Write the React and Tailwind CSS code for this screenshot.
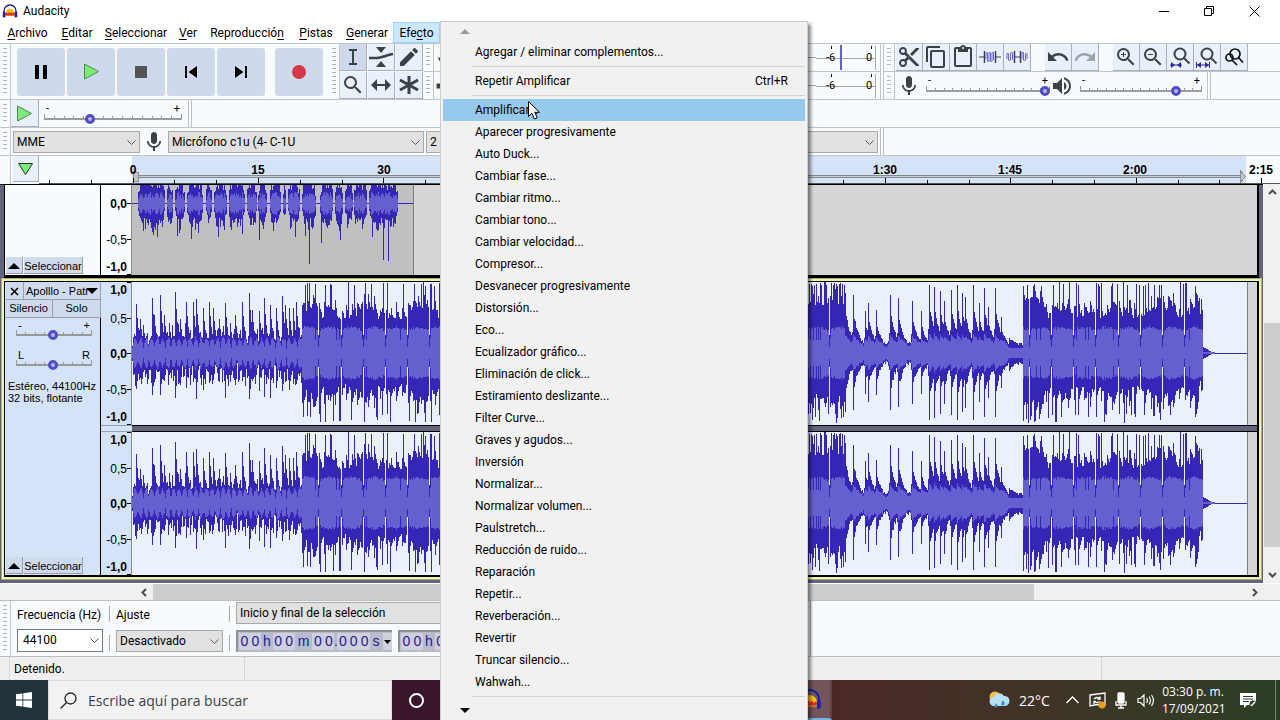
import React, { useState } from 'react';
import {
  MdContentCopy,
  MdContentCut,
  MdContentPaste,
  MdEdit,
  MdMic,
  MdPause,
  MdRedo,
  MdSearch,
  MdSkipNext,
  MdSkipPrevious,
  MdStop,
  MdUndo,
  MdVolumeUp,
  MdZoomIn,
  MdZoomOut,
} from 'react-icons/md';

// ---------------------------------------------------------------------------
// Data
// ---------------------------------------------------------------------------

// [text before, access key, text after, width]
const MENUS = [
  ['', 'A', 'rchivo', 'w-[55px]'],
  ['', 'E', 'ditar', 'w-[44px]'],
  ['', 'S', 'eleccionar', 'w-[74px]'],
  ['', 'V', 'er', 'w-[30px]'],
  ['Reproducció', 'n', '', 'w-[88px]'],
  ['', 'P', 'istas', 'w-[50px]'],
  ['', 'G', 'enerar', 'w-[52px]'],
  ['Efe', 'c', 'to', 'w-[47px]'],
];

const EFFECTS = [
  'Amplificar...',
  'Aparecer progresivamente',
  'Auto Duck...',
  'Cambiar fase...',
  'Cambiar ritmo...',
  'Cambiar tono...',
  'Cambiar velocidad...',
  'Compresor...',
  'Desvanecer progresivamente',
  'Distorsión...',
  'Eco...',
  'Ecualizador gráfico...',
  'Eliminación de click...',
  'Estiramiento deslizante...',
  'Filter Curve...',
  'Graves y agudos...',
  'Inversión',
  'Normalizar...',
  'Normalizar volumen...',
  'Paulstretch...',
  'Reducción de ruido...',
  'Reparación',
  'Repetir...',
  'Reverberación...',
  'Revertir',
  'Truncar silencio...',
  'Wahwah...',
];

// Peaks of the quiet intro: [x, height]
const INTRO = [
  [4, 49], [8, 34], [11, 28], [20, 55], [22, 38], [28, 58], [32, 38], [37, 30], [43, 61], [48, 34], [54, 51],
  [61, 51], [64, 54], [71, 45], [77, 51], [81, 45], [87, 34], [93, 50], [98, 30], [103, 38], [110, 51], [117, 60],
  [120, 43], [127, 42], [132, 55], [138, 48], [144, 45], [150, 57], [153, 48], [157, 45], [161, 45], [164, 51],
];

// Hits of the breakdown, each one decays to the right
const BREAK = [
  [713, 60], [721, 58], [733, 42], [736, 50], [744, 43], [758, 58], [766, 55], [780, 52], [789, 42], [797, 68],
  [802, 66], [808, 62], [812, 52], [819, 63], [825, 68], [830, 60], [833, 56], [841, 68], [847, 50], [852, 65],
  [856, 46], [863, 65], [869, 36],
];

// Voice bursts of the first track: [start, end]
const BURSTS = [
  [6, 33], [35, 41], [43, 53], [55, 71], [74, 80], [82, 95], [97, 113], [115, 125], [126, 135], [138, 149], [151, 154],
  [156, 168], [170, 184], [188, 201], [203, 211], [213, 221], [222, 235], [237, 266],
];
const VOICE_PEAKS = { 25: 34, 59: 36, 127: 37, 169: 42, 177: 61, 189: 40, 208: 37, 251: 57, 256: 58 };

// ---------------------------------------------------------------------------
// Waveforms
// ---------------------------------------------------------------------------

function makeRandom(seed) {
  let s = seed;
  return () => {
    s = (s * 1664525 + 1013904223) % 4294967296;
    return s / 4294967296;
  };
}

const bar = (x, mid, up, down) => `M${x} ${mid - Math.round(up)}h1V${mid + Math.round(down)}h-1z`;

function isLoud(x) {
  return (x >= 170 && x < 713) || (x >= 891 && x < 1071);
}

function hitLevel(hits, x, attack, decay) {
  return hits.reduce((max, [px, h]) => {
    const level = x < px ? h * Math.exp((x - px) / attack) : h * Math.exp((px - x) / decay);
    return Math.max(max, level);
  }, 0);
}

function buildMusic(seed, mid) {
  const rand = makeRandom(seed);
  let peak = '';
  let rms = '';
  let drift = 8;
  for (let x = 0; x < 1083; x += 1) {
    let up;
    let down;
    let body;
    if (isLoud(x)) {
      const phase = (x - 186 + 2220) % 22.2;
      const beat = phase % 5.55;
      drift = Math.max(0, Math.min(18, drift + (rand() - 0.5) * 10));
      up = 33 + drift + 16 * Math.exp(-beat / 1.5) + rand() * 4;
      down = 30 + drift * 0.9 + 18 * Math.exp(-beat / 1.5) + rand() * 6;
      if (rand() < 0.17) up = 67 + rand() * 4;
      if (rand() < 0.17) down = 60 + rand() * 10;
      body = 21 + rand() * 3 + Math.sin(phase / 7) * 3;
      if (phase < 1) {
        up = 18;
        down = 14;
        body = 6;
      } else if (phase < 2) {
        body = 15;
      } else if (rand() < 0.07) {
        body = 13;
      }
      if (x > 1066) {
        up *= 0.8;
        down *= 0.7;
      }
    } else if (x < 170) {
      const pulse = Math.abs(Math.sin((x * Math.PI) / 5.5));
      const hit = hitLevel(INTRO, x, 0.8, 3);
      const tail = hitLevel(INTRO, x, 1, 2.4);
      up = Math.max(hit, 6 + pulse * 10 + rand() * rand() * 16);
      down = Math.max(tail * (0.55 + rand() * 0.4), 6 + pulse * 10 + rand() * 18);
      body = Math.min(4 + pulse * 9 + rand() * 4, up - 2, down - 1);
    } else if (x < 891) {
      const hit = hitLevel(BREAK, x, 1.4, 6.5);
      const sharp = hitLevel(BREAK, x, 0.4, 1);
      up = Math.max(8 + rand() * 3, hit * 0.68 + rand() * 3, sharp);
      down = Math.max(8 + rand() * 3, hit * 0.6 + rand() * 5, sharp * 0.98);
      body = Math.min(up - 3, 6 + hit * 0.18 + rand() * 2);
      if (x > 876) {
        const fall = Math.max(0, 884 - x);
        up = 8 + fall * 0.7 + rand() * 3;
        down = 9 + fall * 0.9 + rand() * 3;
        body = 5;
      }
    } else {
      up = Math.max(1, 6 - (x - 1071) * 0.6);
      down = up;
      body = 1;
    }
    peak += bar(x, mid, up, down);
    rms += bar(x, mid, body, body);
  }
  return { peak, rms };
}

function buildVoice(mid) {
  const rand = makeRandom(77);
  let peak = '';
  let rms = '';
  BURSTS.forEach(([start, end]) => {
    for (let x = start; x < end; x += 1) {
      const edge = Math.min(1, (x - start + 2) / 4, (end - x + 1) / 4);
      const down = VOICE_PEAKS[x] || (15 + rand() * rand() * 20) * edge;
      const body = (5 + rand() * 6) * edge;
      peak += bar(x, mid, Math.min(18, (13 + rand() * 16) * edge), down);
      rms += bar(x, mid, body, body + 1);
    }
  });
  return { peak, rms };
}

const VOICE = buildVoice(18);
const LEFT = buildMusic(12, 71);
const RIGHT = buildMusic(12, 71);

function VoiceWave() {
  return (
    <svg className="block h-[90px] w-full bg-[#d6d6d6]" shapeRendering="crispEdges" aria-hidden="true">
      <rect width="281" height="90" fill="#c0c0c0" />
      <path d="M0 18h281v1H0z" fill="#3226b5" />
      <path d={VOICE.peak} fill="#3527b6" />
      <path d={VOICE.rms} fill="#655fcf" />
      <path d="M281 0h1v90h-1z" fill="#7c7c7c" />
    </svg>
  );
}

function MusicWave({ data }) {
  return (
    <svg className="block h-[143px] w-full bg-[#d6d6d6]" shapeRendering="crispEdges" aria-hidden="true">
      <rect width="1115" height="143" fill="#e9f1fd" />
      <path d="M0 71h1115v1H0z" fill="#3226b5" />
      <path d={data.peak} fill="#3527b6" />
      <path d={data.rms} fill="#655fcf" />
      <path d="M1115 0h1v143h-1z" fill="#7c7c7c" />
    </svg>
  );
}

// Amplitude scale at the left of a channel
function Scale({ labels, className }) {
  return (
    <svg className={`block w-[31px] shrink-0 border-r border-[#8a8a8a] ${className}`} shapeRendering="crispEdges">
      {labels.map(([text, y, tick]) => (
        <g key={text}>
          <text
            x="26"
            y={y + 4}
            textAnchor="end"
            className={`text-[12px] ${text === '0,5' || text === '-0,5' ? '' : 'font-bold'}`}
          >
            {text}
          </text>
          <path d={`M26 ${tick}h4v1h-4z`} />
        </g>
      ))}
    </svg>
  );
}

const CHANNEL_LABELS = [
  ['1,0', 8, 0],
  ['0,5', 37, 36],
  ['0,0', 72, 71],
  ['-0,5', 108, 107],
  ['-1,0', 135, 142],
];

// ---------------------------------------------------------------------------
// Small pieces
// ---------------------------------------------------------------------------

function Grabber() {
  return (
    <div className="flex w-[11px] shrink-0 flex-col items-center justify-evenly self-stretch border-r border-[#c2c5c9] px-[3px] py-1">
      <div className="h-full w-[4px] bg-[repeating-linear-gradient(to_bottom,#b4b8bd_0_1px,transparent_1px_4px)]" />
    </div>
  );
}

function DoubleLine() {
  return <div className="w-[4px] shrink-0 self-stretch border-x border-[#bcc0c4]" />;
}

function Slider({ label, low = '-', high = '+', value, className, ticks = 15 }) {
  const [current, setCurrent] = useState(value);
  return (
    <div className={className}>
      <div className="flex h-[10px] justify-between px-[2px] text-[11px] leading-[10px]">
        <span>{low}</span>
        <span>{high}</span>
      </div>
      <div className="relative h-[10px]">
        <div className="flex h-[6px] items-end justify-between border-b-2 border-[#9a9a9a]">
          {Array.from({ length: ticks }, (_, i) => (
            <span key={i} className="h-[2px] w-px bg-[#9a9a9a] first:h-[4px] last:h-[4px]" />
          ))}
        </div>
        <input
          type="range"
          aria-label={label}
          value={current}
          onChange={(e) => setCurrent(e.target.value)}
          className="absolute inset-0 h-[10px] w-full appearance-none bg-transparent [&::-webkit-slider-thumb]:size-[10px] [&::-webkit-slider-thumb]:appearance-none [&::-webkit-slider-thumb]:rounded-full [&::-webkit-slider-thumb]:border-[3px] [&::-webkit-slider-thumb]:border-[#504cc6] [&::-webkit-slider-thumb]:bg-[#b9b8ea]"
        />
      </div>
    </div>
  );
}

function Select({ label, value, className }) {
  return (
    <div className={`relative shrink-0 ${className}`}>
      <select
        aria-label={label}
        defaultValue={value}
        className="block h-[22px] w-full appearance-none border border-[#a9a9a9] bg-[#e1e1e1] pl-[3px] text-[12px]"
      >
        <option>{value}</option>
      </select>
      <svg className="pointer-events-none absolute top-[9px] right-[4px]" width="9" height="6" fill="none" stroke="#555">
        <path d="M.5 .5 4.500 4.500 8.500 .5" />
      </svg>
    </div>
  );
}

function TransportButton({ label, children }) {
  return (
    <button aria-label={label} className="flex size-12 shrink-0 items-center justify-center rounded-[3px] bg-[#cedaec]">
      {children}
    </button>
  );
}

function ToolButton({ label, active, children }) {
  return (
    <button
      aria-label={label}
      className={`flex h-[27px] w-[27px] shrink-0 items-center justify-center border-r border-b border-[#aab0bb] text-[#3b4245] ${
        active ? 'bg-[#cedaec]' : 'bg-[#e8f0fb]'
      }`}
    >
      {children}
    </button>
  );
}

function PlayIcon({ size = 17 }) {
  return (
    <svg width={size} height={size} viewBox="0 0 17 17">
      <path d="M1.500 1 15.500 8.500 1.500 16z" fill="#7bea76" stroke="#4d8b4b" />
    </svg>
  );
}

function AudacityIcon({ className }) {
  return (
    <svg className={className} viewBox="0 0 16 16">
      <path d="M3.500 9C4.500 6.500 6 5.500 8 5.500s3.500 1 4.500 3.500v4h-9z" fill="#f7c21a" />
      <path d="M3 11l1.500-1.500 1 1L7 9l1 1.500L9 9l1.500 1.500 1-1L13 11l-1 1.500H4z" fill="#e0301e" />
      <path d="M2 10V8a6 6 0 0 1 12 0v2" fill="none" stroke="#1a1aa8" strokeWidth="1.300" />
      <rect x=".8" y="8.500" width="2.600" height="6" rx="1.300" fill="#1f1fb4" />
      <rect x="12.600" y="8.500" width="2.600" height="6" rx="1.300" fill="#1f1fb4" />
    </svg>
  );
}

// ---------------------------------------------------------------------------
// Window header
// ---------------------------------------------------------------------------

function TitleBar() {
  return (
    <header className="flex h-[22px] items-center bg-white pr-[3px] pl-[2px] text-[12px]">
      <AudacityIcon className="size-4" />
      <h1 className="ml-[5px] grow">Audacity</h1>
      <button aria-label="Minimizar" className="flex w-[45px] justify-center">
        <svg width="11" height="11" stroke="#000" fill="none"><path d="M0 5.500h10" /></svg>
      </button>
      <button aria-label="Restaurar" className="flex w-[45px] justify-center">
        <svg width="11" height="11" stroke="#000" fill="none"><path d="M.5 2.500h7v7h-7zM2.500 2.500v-2h7v7h-2" /></svg>
      </button>
      <button aria-label="Cerrar" className="flex w-[45px] justify-center">
        <svg width="11" height="11" stroke="#000" fill="none"><path d="M.5 .5l10 10M10.500 .5l-10 10" /></svg>
      </button>
    </header>
  );
}

function MenuBar() {
  return (
    <nav className="flex h-[22px] border-b border-[#c2c5c9] bg-white text-[12px]">
      {MENUS.map(([before, key, after, width]) => (
        <button
          key={before + key + after}
          className={`flex shrink-0 items-center justify-center whitespace-nowrap border ${width} ${
            key === 'c' ? 'border-[#99d1ff] bg-[#cce8ff]' : 'border-transparent'
          }`}
        >
          {before}
          <u className="underline-offset-2">{key}</u>
          {after}
        </button>
      ))}
    </nav>
  );
}

// ---------------------------------------------------------------------------
// Toolbars
// ---------------------------------------------------------------------------

function Meter({ label, marker }) {
  return (
    <div className="flex h-7 w-[457px] border-b border-[#c2c5c9]">
      <Grabber />
      <div className="flex w-6 items-center text-[#3b4245]">
        {label === 'rec' ? <MdMic size={20} /> : <MdVolumeUp size={20} />}
      </div>
      <div className="flex grow items-center">
        <div className="h-px grow bg-[#a7a7a7]" />
      </div>
      <svg width="64" height="27" shapeRendering="crispEdges">
        <path d="M0 14h60v1H0zM59 2h1v24h-1z" fill="#a7a7a7" />
        <path d="M15 2h1v3h-1zM55 2h1v3h-1z" />
        {marker && <path d="M24 1h2v25h-2z" fill="#6460cf" />}
        <text x="10" y="17" className="text-[11px]">-6</text>
        <text x="50" y="17" className="text-[11px]">0</text>
      </svg>
    </div>
  );
}

function MainToolbar() {
  return (
    <div className="flex h-14 overflow-hidden border-b border-[#c2c5c9]">
      <Grabber />
      <div className="flex shrink-0 items-center gap-[2px] px-[6px]">
        <TransportButton label="Pausa"><MdPause size={24} /></TransportButton>
        <TransportButton label="Reproducir"><PlayIcon /></TransportButton>
        <TransportButton label="Parar"><MdStop size={24} className="text-[#555]" /></TransportButton>
        <TransportButton label="Ir al inicio"><MdSkipPrevious size={24} /></TransportButton>
        <TransportButton label="Ir al final"><MdSkipNext size={24} /></TransportButton>
        <div className="w-[6px]" />
        <TransportButton label="Grabar">
          <span className="size-[14px] rounded-full bg-[#d3374a]" />
        </TransportButton>
      </div>
      <Grabber />
      <div className="grid shrink-0 grid-cols-3 gap-px">
        <ToolButton label="Selección" active>
          <svg width="12" height="18" fill="none" stroke="#3b4245" strokeWidth="2"><path d="M2 2h8M2 16h8M6 2v14" /></svg>
        </ToolButton>
        <ToolButton label="Envolvente">
          <svg width="26" height="22" viewBox="0 0 26 22" fill="#3b4245">
            <path d="M8 1h10l-5 6zM8 21h10l-5-6z" />
            <path d="M1 12h8c5 0 9-3 16-4" fill="none" stroke="#3b4245" strokeWidth="2.500" />
          </svg>
        </ToolButton>
        <ToolButton label="Dibujo"><MdEdit size={24} /></ToolButton>
        <ToolButton label="Ampliación"><MdSearch size={24} /></ToolButton>
        <ToolButton label="Desplazamiento">
          <svg width="22" height="14" fill="#3b4245"><path d="M1 7 7 1v5h8V1l6 6-6 6V8H7v5z" /></svg>
        </ToolButton>
        <ToolButton label="Multiherramienta">
          <svg width="20" height="20" stroke="#3b4245" strokeWidth="3"><path d="M10 1v18M1 5l18 10M1 15 19 5" /></svg>
        </ToolButton>
      </div>
      <div className="shrink-0">
        <Meter label="rec" marker />
        <Meter label="play" />
      </div>
      <div className="w-[4px] shrink-0 border-x border-[#c2c5c9]" />
      <div className="grow">
        <div className="flex h-7 border-b border-[#c2c5c9]">
          <Grabber />
          <div className="ml-px flex">
            <ToolButton label="Cortar"><MdContentCut size={24} /></ToolButton>
            <ToolButton label="Copiar"><MdContentCopy size={24} /></ToolButton>
            <ToolButton label="Pegar"><MdContentPaste size={24} /></ToolButton>
            <ToolButton label="Recortar">
              <svg width="22" height="16" fill="none">
                <path d="M0 8h5M17 8h5" stroke="#3b4245" />
                <path d="M5.500 2v12M16.500 2v12" stroke="#3b4245" strokeWidth="1.500" />
                <path d="M7 10V4q1-2 1.500 0v8q1 2 1.500 0V4q1-2 1.500 0v8q1 2 1.500 0V4q1-2 1.500 0v7" stroke="#6e6ad4" />
              </svg>
            </ToolButton>
            <ToolButton label="Silenciar">
              <svg width="22" height="16" fill="none">
                <path d="M8 8h6" stroke="#3b4245" />
                <path d="M8.500 2v12M14.500 2v12" stroke="#3b4245" strokeWidth="1.500" />
                <path d="M1 10V5q1-2 1.500 0v6q1 2 2 0V4q1-2 2 0v7M16 10V4q1-2 1.500 0v7q1 2 2 0V5q1-2 1.500 0v5" stroke="#6e6ad4" />
              </svg>
            </ToolButton>
          </div>
          <div className="ml-[14px] flex">
            <ToolButton label="Deshacer"><MdUndo size={24} /></ToolButton>
            <ToolButton label="Rehacer"><MdRedo size={24} className="text-[#9ea3a7]" /></ToolButton>
          </div>
          <div className="ml-[14px] flex">
            <ToolButton label="Acercar"><MdZoomIn size={24} /></ToolButton>
            <ToolButton label="Alejar"><MdZoomOut size={24} /></ToolButton>
            <ToolButton label="Ajustar selección">
              <svg width="24" height="24" fill="none" stroke="#3b4245" strokeWidth="2">
                <circle cx="12" cy="9" r="5.500" /><path d="M16 13l5.500 5.500" />
                <path d="M2 20h12" stroke="#2c2aa0" strokeWidth="1" /><path d="M3 17l4 3-4 3zM13 17l-4 3 4 3z" fill="#2c2aa0" stroke="none" />
              </svg>
            </ToolButton>
            <ToolButton label="Ajustar proyecto">
              <svg width="24" height="24" fill="none" stroke="#3b4245" strokeWidth="2">
                <circle cx="12" cy="9" r="5.500" /><path d="M16 13l5.500 5.500" />
                <path d="M1 20h14M1.500 17v6M14.500 17v6" stroke="#2c2aa0" strokeWidth="1" /><path d="M6 17l-4 3 4 3zM10 17l4 3-4 3z" fill="#2c2aa0" stroke="none" />
              </svg>
            </ToolButton>
            <ToolButton label="Alternar zoom">
              <svg width="22" height="22" fill="none" stroke="#111" strokeWidth="1.700">
                <circle cx="12" cy="8" r="5" /><path d="M15.500 11.500l4.500 5" /><circle cx="6.500" cy="11.500" r="3.500" /><path d="M9 14l5 5" />
              </svg>
            </ToolButton>
          </div>
        </div>
        <div className="flex h-[27px] items-center">
          <Grabber />
          <MdMic size={24} className="ml-[2px] shrink-0 text-[#3b4245]" />
          <Slider label="Volumen de grabación" value={100} className="ml-[5px] w-[124px] shrink-0" />
          <MdVolumeUp size={24} className="shrink-0 text-[#3b4245]" />
          <Slider label="Volumen de reproducción" value={81} className="mr-[5px] ml-[6px] w-[122px] shrink-0" />
          <DoubleLine />
        </div>
      </div>
    </div>
  );
}

function SpeedToolbar() {
  return (
    <div className="flex h-7 items-center border-b border-[#c2c5c9]">
      <Grabber />
      <button aria-label="Reproducir a velocidad" className="flex h-[27px] w-[28px] items-center justify-center border-r border-b border-[#aab0bb] bg-[#e8f0fb]">
        <PlayIcon />
      </button>
      <Slider label="Velocidad" value={32} className="mr-[6px] ml-[5px] w-[138px]" />
      <DoubleLine />
    </div>
  );
}

function DeviceToolbar() {
  return (
    <div className="flex h-7 items-center overflow-hidden border-b border-[#c2c5c9]">
      <Grabber />
      <Select label="Servidor de audio" value="MME" className="ml-[2px] w-[127px]" />
      <MdMic size={24} className="mx-[2px] shrink-0 text-[#3b4245]" />
      <Select label="Dispositivo de grabación" value="Micrófono c1u (4- C-1U" className="w-[256px]" />
      <Select label="Canales de grabación" value="2 canales" className="ml-[2px] w-[160px]" />
      <MdVolumeUp size={24} className="mx-[2px] shrink-0 text-[#3b4245]" />
      <Select label="Dispositivo de reproducción" value="Altavoces" className="mr-[2px] w-[264px]" />
      <DoubleLine />
    </div>
  );
}

function TimeRuler() {
  const labels = ['0', '15', '30', '45', '1:00', '1:15', '1:30', '1:45', '2:00', '2:15'];
  return (
    <div className="flex h-7">
      <div className="w-[11px] shrink-0 border-r border-[#c2c5c9]" />
      <button aria-label="Cabezal fijo" className="ml-[2px] flex h-[26px] w-[26px] shrink-0 items-center justify-center border-r border-b border-[#aab0bb] bg-[#e8f0fb]">
        <svg width="17" height="14"><path d="M1.500 1.500h14l-7 11z" fill="#7bea76" stroke="#1e3b1e" /></svg>
      </button>
      <svg className="block h-7 w-full grow" shapeRendering="crispEdges">
        <rect x="93" width="1114" height="27" fill="#d5e3f9" />
        <path d="M98 19h1103v3H98z" fill="#c6cdd8" />
        <path d="M98 19h1103v1H98zM98 21h1103v1H98z" fill="#85898f" />
        <path d="M94.500 15.500v10h5v-9zM1201.500 15v11l5-5.500z" fill="#c4c4c4" stroke="#8b8b8b" />
        <path d="M0 27h1241v1H0z" fill="#555" />
        {Array.from({ length: 30 }, (_, i) => (
          <path key={i} d={`M${Math.round(10 + i * 41.8)} ${i % 3 === 2 ? 22 : 24}h1v5h-1z`} />
        ))}
        {labels.map((text, i) => (
          <text key={text} x={94 + Math.round(i * 125.3)} y="18" textAnchor="middle" className="text-[12px] font-bold">
            {text}
          </text>
        ))}
      </svg>
    </div>
  );
}

// ---------------------------------------------------------------------------
// Tracks
// ---------------------------------------------------------------------------

function TrackFooter() {
  return (
    <div className="mt-auto flex gap-px p-px text-[11px]">
      <button aria-label="Contraer pista" className="flex h-[17px] w-[17px] items-end justify-center border-r border-b border-[#98a0ae] bg-[#cfdaed] pb-1">
        <svg width="12" height="6"><path d="M0 6h12L6 0z" /></svg>
      </button>
      <button className="h-[17px] w-[59px] border-r border-b border-[#98a0ae] bg-[#cfdaed] pt-px">Seleccionar</button>
    </div>
  );
}

function VoiceTrack() {
  return (
    <section className="mr-[3px] ml-1 flex border-r-2 border-b-[3px] border-l border-black">
      <div className="flex w-24 shrink-0 flex-col border-r border-black bg-[#f7fbfe]">
        <TrackFooter />
      </div>
      <Scale className="h-[90px] bg-[#f7fbfe]" labels={[['0,0', 19, 18], ['-0,5', 55, 54], ['-1,0', 82, 89]]} />
      <div className="min-w-0 grow"><VoiceWave /></div>
    </section>
  );
}

function MusicTrack() {
  return (
    <section className="ml-px border border-[#a9ad7c] bg-[#f3f6a8] p-[2px]">
      <div className="flex border-t border-r-2 border-b-2 border-l border-black">
        <div className="flex w-24 shrink-0 flex-col bg-[#d5e3f9] text-[11px]">
          <div className="flex border-r border-[#98a0ae] pl-px">
            <button aria-label="Cerrar pista" className="flex h-[18px] w-[18px] shrink-0 items-center justify-center border-r border-b border-[#98a0ae] bg-[#cfdaed] pt-px">
              <svg width="9" height="9" stroke="#000" strokeWidth="1.500"><path d="M1 1l7 7M8 1 1 8" /></svg>
            </button>
            <button className="flex h-[18px] min-w-0 grow items-center border-b border-[#98a0ae] bg-[#cfdaed] pt-px pl-[2px] whitespace-nowrap">
              <span className="min-w-0 grow text-left">Apolllo - Patr</span>
              <svg width="12" height="6" className="mr-[2px] -ml-3 shrink-0"><path d="M0 0h12L6 6z" /></svg>
            </button>
          </div>
          <div className="flex">
            <button className="h-[18px] w-12 border-r border-b border-[#98a0ae] bg-[#cfdaed]">Silencio</button>
            <button className="h-[18px] w-12 border-r border-b border-[#98a0ae] bg-[#cfdaed]">Solo</button>
          </div>
          <div className="flex grow flex-col border-r border-black">
            <Slider label="Ganancia" value={49} ticks={9} className="mt-[2px] ml-[11px] w-[76px]" />
            <Slider label="Balance" low="L" high="R" value={49} ticks={9} className="mt-[10px] ml-[11px] w-[76px]" />
            <p className="mt-[10px] ml-[3px] leading-[12px] whitespace-nowrap">
              Estéreo, 44100Hz
              <br />
              32 bits, flotante
            </p>
            <TrackFooter />
          </div>
        </div>
        <div className="flex min-w-0 grow flex-col">
          <div className="flex">
            <Scale className="h-[143px] bg-[#d5e3f9]" labels={CHANNEL_LABELS} />
            <div className="min-w-0 grow"><MusicWave data={LEFT} /></div>
          </div>
          <div className="flex h-[7px]">
            <div className="w-[31px] border-y border-[#98a0ae] bg-[#d5e3f9]" />
            <div className="grow border-y border-black bg-[#62647f]" />
          </div>
          <div className="flex">
            <Scale className="h-[143px] bg-[#d5e3f9]" labels={CHANNEL_LABELS} />
            <div className="min-w-0 grow"><MusicWave data={RIGHT} /></div>
          </div>
        </div>
      </div>
    </section>
  );
}

function ScrollArrow({ label, d }) {
  return (
    <button aria-label={label} className="flex size-[17px] shrink-0 items-center justify-center">
      <svg width="9" height="9" fill="none" stroke="#4c4c4c" strokeWidth="2"><path d={d} /></svg>
    </button>
  );
}

function TrackArea() {
  return (
    <main className="flex grow">
      <div className="flex min-w-0 grow flex-col border-t border-black bg-[#62647f] pr-px pb-[3px]">
        <VoiceTrack />
        <MusicTrack />
      </div>
      <div className="flex w-[17px] shrink-0 flex-col bg-[#f0f0f0] pl-px">
        <ScrollArrow label="Subir" d="M1 6l3.500-3.500L8 6" />
        <div className="grow-[122]" />
        <div className="grow-[224] bg-[#cdcdcd]" />
        <div className="grow-[19]" />
        <ScrollArrow label="Bajar" d="M1 3l3.500 3.500L8 3" />
      </div>
    </main>
  );
}

function HorizontalScroll() {
  return (
    <div className="flex h-[17px] border-t border-white bg-[#f0f0f0] pr-[17px] pl-[136px]">
      <ScrollArrow label="Izquierda" d="M6 1 2.500 4.500 6 8" />
      <div className="grow-[881] bg-[#cdcdcd]" />
      <div className="grow-[212]" />
      <ScrollArrow label="Derecha" d="M3 1l3.500 3.500L3 8" />
    </div>
  );
}

// ---------------------------------------------------------------------------
// Selection toolbar and status
// ---------------------------------------------------------------------------

function TimeField({ label }) {
  const cells = '00h00m00.000s'.split('');
  const widths = { h: 'w-3 bg-[#b9bacb]', m: 'w-[18px] bg-[#b9bacb]', s: 'w-3 bg-[#b9bacb]', '.': 'w-[3px] bg-[#b9bacb]' };
  return (
    <div role="group" aria-label={label} className="flex h-[22px] w-[156px] shrink-0 border-t-2 border-l-2 border-[#8d9098] bg-[#b9bacb] pt-px pb-[2px] pl-px font-['Liberation_Sans',sans-serif] text-[14px] leading-[17px] text-[#1c1a98]">
      {cells.map((cell, i) => (
        <span key={i} className={`flex justify-center ${widths[cell] || 'w-[11px] bg-[#d0cfdc]'}`}>{cell}</span>
      ))}
      <button aria-label={`Formato: ${label}`} className="ml-px flex h-[17px] w-[9px] items-center justify-center bg-[#d0cfdc]">
        <svg width="7" height="4"><path d="M0 0h7L3.500 4z" /></svg>
      </button>
    </div>
  );
}

function SelectionToolbar() {
  return (
    <div className="flex h-[57px] border-y border-[#bcc0c4] text-[12px]">
      <Grabber />
      <div className="flex w-[800px] shrink-0 overflow-hidden border-r border-[#a9a9a9] pl-[6px]">
        <div className="flex w-[86px] shrink-0 flex-col justify-between pb-1">
          <label htmlFor="rate" className="flex h-7 items-center whitespace-nowrap">Frecuencia (Hz)</label>
          <div className="relative">
            <input id="rate" defaultValue="44100" className="block h-[23px] w-full border border-[#7a7a7a] bg-white pb-px pl-[5px]" />
            <svg className="pointer-events-none absolute top-[9px] right-[4px]" width="9" height="6" fill="none" stroke="#555">
              <path d="M.5 .5 4.500 4.500 8.500 .5" />
            </svg>
          </div>
        </div>
        <div className="mx-[6px] flex shrink-0 flex-col justify-between py-[5px]">
          <div className="h-4 w-px bg-[#a9a9a9]" />
          <div className="h-4 w-px bg-[#a9a9a9]" />
        </div>
        <div className="flex w-[107px] shrink-0 flex-col justify-between pb-1">
          <span className="flex h-7 items-center">Ajuste</span>
          <Select label="Ajuste" value="Desactivado" className="w-full" />
        </div>
        <div className="mx-[6px] flex shrink-0 flex-col justify-between py-[5px]">
          <div className="h-4 w-px bg-[#a9a9a9]" />
          <div className="h-4 w-px bg-[#a9a9a9]" />
        </div>
        <div className="flex flex-col justify-between pt-px pb-1">
          <Select label="Tipo de selección" value="Inicio y final de la selección" className="w-[320px]" />
          <div className="flex gap-[6px]">
            <TimeField label="Inicio" />
            <TimeField label="Final" />
          </div>
        </div>
      </div>
    </div>
  );
}

function StatusBar() {
  return (
    <footer className="flex h-[23px] items-stretch bg-[#efefef] text-[12px]">
      <div className="w-[10px] border-r border-[#d5d5d5]" />
      <p className="flex w-[235px] items-center border-r border-[#d5d5d5] pt-px pl-1">Detenido.</p>
      <div className="grow border-r border-[#d5d5d5]" />
      <div className="w-[178px]" />
    </footer>
  );
}

// ---------------------------------------------------------------------------
// Effect menu
// ---------------------------------------------------------------------------

function MenuEntry({ text, shortcut, active }) {
  return (
    <button
      role="menuitem"
      className={`flex h-[22px] w-full items-center justify-between pr-[17px] pl-8 whitespace-nowrap ${active ? 'bg-[#95caed]' : ''}`}
    >
      <span>{text}</span>
      {shortcut && <span>{shortcut}</span>}
    </button>
  );
}

function MenuSeparator() {
  return (
    <div className="flex h-[7px] items-center pl-[29px]">
      <div className="h-px grow bg-[#d2d2d2]" />
    </div>
  );
}

function EffectMenu() {
  return (
    <div
      role="menu"
      className="absolute top-[21px] left-[440px] w-[368px] border border-b-0 border-[#cccccc] bg-[#f1f1f1] px-[2px] text-[12px] shadow-[3px_3px_3px_rgba(0,0,0,0.45)]"
    >
      <div className="flex h-[19px] items-center pl-[17px]">
        <svg width="10" height="5"><path d="M0 5h10L5 0z" fill="#9b9b9b" /></svg>
      </div>
      <MenuEntry text="Agregar / eliminar complementos..." />
      <MenuSeparator />
      <MenuEntry text="Repetir Amplificar" shortcut="Ctrl+R" />
      <MenuSeparator />
      {EFFECTS.map((name, i) => (
        <MenuEntry key={name} text={name} active={i === 0} />
      ))}
      <MenuSeparator />
      <div className="flex h-5 items-center pl-[17px]">
        <svg width="10" height="5"><path d="M0 0h10L5 5z" /></svg>
      </div>
    </div>
  );
}

// ---------------------------------------------------------------------------
// Windows taskbar
// ---------------------------------------------------------------------------

function Taskbar() {
  return (
    <div className="flex h-10 items-stretch bg-linear-to-r from-[#38162b] from-35% via-[#4b2828] via-65% to-[#2b3f24] font-['Open_Sans','Noto_Sans',sans-serif] text-white">
      <button aria-label="Inicio" className="flex w-12 shrink-0 items-center justify-center bg-[#20343a]">
        <svg width="16" height="16" fill="#fff"><path d="M0 2.300 6.500 1.400v6.200H0zM7.300 1.300 16 0v7.600H7.300zM0 8.400h6.500v6.200L0 13.700zM7.300 8.400H16V16l-8.700-1.300z" /></svg>
      </button>
      <label className="flex w-[344px] shrink-0 items-center border border-[#dcdcdc] bg-[#f2f2f2] pl-[11px]">
        <svg width="17" height="17" fill="none" stroke="#222" strokeWidth="1.300"><circle cx="10.500" cy="6.500" r="5.500" /><path d="M6.500 10.500.5 16.500" /></svg>
        <input
          aria-label="Buscar"
          placeholder="Escribe aquí para buscar"
          className="ml-[11px] grow bg-transparent text-[14px] placeholder:text-[#3b4245]"
        />
      </label>
      <button aria-label="Cortana" className="flex w-12 shrink-0 items-center justify-center">
        <span className="size-[15px] rounded-full border-2 border-white" />
      </button>
      <button aria-label="Audacity" className="ml-[342px] flex w-[50px] shrink-0 items-center border-r-2 border-b-2 border-r-[#5a4248] border-b-[#6fb7e8] bg-[#73545a] pl-4">
        <AudacityIcon className="size-6" />
      </button>
      <div className="flex grow items-center justify-end">
        <svg width="22" height="18" className="shrink-0">
          <circle cx="7" cy="6" r="5.500" fill="#f4c04a" />
          <path d="M6 15a4.500 4.500 0 0 1 0-9 5.500 5.500 0 0 1 10-1 5 5 0 0 1 1 10z" fill="#b9dff2" />
          <path d="M8 12q3 4 0 4.500t0-4.500zM15 9q3.500 5 0 5.500t0-5.500z" fill="#2f8fd0" />
        </svg>
        <span className="ml-[9px] w-[38px] text-[14px]">22°C</span>
        <svg width="13" height="8" className="ml-[9px] shrink-0" fill="none" stroke="#fff" strokeWidth="1.300"><path d="M.5 7 6.500 1l6 6" /></svg>
        <svg width="18" height="17" className="ml-[10px] shrink-0" fill="none" stroke="#fff" strokeWidth="1.300">
          <path d="M1 3l15-2v12l-8-.5L1 14z" />
          <path d="M5 7q3-3 6 0M11 4.500V7H8.500M11 9.500q-3 2-6 0M5 12V9.500h2" />
          <circle cx="13" cy="13" r="3.500" fill="#f09a1a" stroke="none" />
        </svg>
        <svg width="12" height="17" className="ml-2 shrink-0" fill="none" stroke="#fff" strokeWidth="1.300">
          <rect x="3" y="1" width="6" height="10" rx="1" fill="#fff" /><path d="M1 9v4h10V9M6 13v3M3 16h6" />
        </svg>
        <svg width="18" height="15" className="ml-[10px] shrink-0" fill="none" stroke="#fff" strokeWidth="1.200">
          <path d="M1 5.500h2.500L7 2v11L3.500 9.500H1zM9.500 5q2 2.500 0 5M12 3.500q3 4 0 8M14.500 2q4 5.500 0 11" />
        </svg>
        <div className="ml-[7px] w-[62px] text-center text-[12px] leading-[17px] whitespace-nowrap">
          <div>03:30 p. m.</div>
          <div>17/09/2021</div>
        </div>
        <svg width="18" height="17" className="mr-[17px] ml-4 shrink-0">
          <path d="M0 1h16v12H7l-3 3v-3H0z" fill="#fff" />
          <path d="M3 4.500h10M3 7h10M3 9.500h6" stroke="#33402a" />
          <circle cx="13" cy="12" r="3.500" fill="#33402a" /><path d="M11 14l4-4" stroke="#fff" strokeWidth="1.500" />
        </svg>
        <div className="mr-1 w-px self-stretch bg-[#7b8674]" />
      </div>
    </div>
  );
}

function Pointer() {
  return (
    <svg className="pointer-events-none absolute top-[100px] left-[527px]" width="14" height="21">
      <path d="M1.500 1.500v15l3.500-3.200 2.400 5.700 2.800-1.200-2.400-5.500h4.700z" fill="#fff" stroke="#000" />
    </svg>
  );
}

function App() {
  return (
    <div className="relative flex min-h-screen flex-col overflow-hidden bg-[#f7fbfe] font-[Roboto,'Noto_Sans',sans-serif] text-black">
      <TitleBar />
      <MenuBar />
      <MainToolbar />
      <SpeedToolbar />
      <DeviceToolbar />
      <div className="flex grow flex-col font-['Liberation_Sans',Arial,sans-serif]">
        <TimeRuler />
        <TrackArea />
      </div>
      <HorizontalScroll />
      <SelectionToolbar />
      <StatusBar />
      <Taskbar />
      <EffectMenu />
      <Pointer />
    </div>
  );
}

export default App;
